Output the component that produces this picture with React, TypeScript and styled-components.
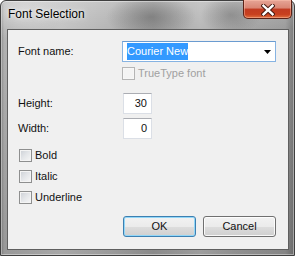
import React from 'react';
import styled, { createGlobalStyle } from 'styled-components';

const Global = createGlobalStyle`
  html, body { margin: 0; padding: 0; background: #ffffff; }
  body { font-family: "Liberation Sans", Arial, sans-serif; }
  * { box-sizing: border-box; }
`;

const Window = styled.div`
  width: 295px;
  height: 256px;
  display: flex;
  flex-direction: column;
  padding: 0 5px 5px 6px;
  border: 1px solid #3f3f3f;
  border-radius: 6px 6px 0 0;
  box-shadow: inset 0 0 0 1px rgba(255, 255, 255, 0.4);
  background:
    radial-gradient(ellipse 45px 22px at 150px 16px, rgba(80, 80, 80, 0.45), rgba(80, 80, 80, 0)),
    radial-gradient(ellipse 30px 20px at 230px 14px, rgba(80, 80, 80, 0.35), rgba(80, 80, 80, 0)),
    radial-gradient(ellipse 40px 30px at 20px 10px, rgba(255, 255, 255, 0.35), rgba(255, 255, 255, 0)),
    linear-gradient(to bottom, rgba(255, 255, 255, 0.2), rgba(255, 255, 255, 0) 28px, rgba(0, 0, 0, 0.15) 100%),
    linear-gradient(to right, #8a8a8a 0px, #b2b2b2 3px, #c4c4c4 20%, #b4b4b4 38%, #a2a2a2 52%, #b8b8b8 68%, #a8a8a8 80%, #9c9c9c 97%, #7c7c7c 100%);
`;

const TitleBar = styled.div`
  height: 28px;
  display: flex;
  align-items: flex-start;
  justify-content: space-between;
  flex: none;
`;

const Title = styled.div`
  margin: 6px 0 0 1px;
  font-size: 12px;
  line-height: 15px;
  color: #000;
  text-shadow: 0 0 6px rgba(255, 255, 255, 0.9), 0 0 3px rgba(255, 255, 255, 0.7);
`;

const CloseButton = styled.div`
  width: 49px;
  height: 19px;
  margin: -1px -3px 0 0;
  border: 1px solid #5b2217;
  border-top: none;
  border-radius: 0 0 5px 5px;
  display: flex;
  align-items: center;
  justify-content: center;
  box-shadow: inset 0 0 0 1px rgba(255, 200, 180, 0.45);
  background: linear-gradient(to bottom, #e6a596 0%, #d98573 45%, #c13b21 50%, #c8401f 80%, #e0703f 100%);
`;

const CloseGlyph = styled.svg`
  display: block;
  margin-top: 1px;
`;

const Client = styled.div`
  flex: 1;
  border: 1px solid #5f5f5f;
  background: #f0f0f0;
  padding: 11px 10px 0 10px;
  display: flex;
  flex-direction: column;
  font-size: 11px;
  color: #111;
`;

const Row = styled.div<{ $top?: number; $indent?: number }>`
  display: flex;
  align-items: center;
  margin-top: ${(p) => p.$top ?? 0}px;
  padding-left: ${(p) => p.$indent ?? 0}px;
`;

const Label = styled.div<{ $w: number }>`
  width: ${(p) => p.$w}px;
  flex: none;
  line-height: 13px;
`;

const Combo = styled.div`
  width: 154px;
  height: 21px;
  background: #fff;
  border: 1px solid #86b3e2;
  border-top-color: #6a9bd0;
  display: flex;
  align-items: center;
  padding: 0 4px;
  justify-content: space-between;
`;

const Selected = styled.span`
  background: #3399ff;
  color: #fff;
  line-height: 17px;
  height: 17px;
`;

const Arrow = styled.svg`
  display: block;
`;

const Box = styled.span<{ $disabled?: boolean }>`
  width: 13px;
  height: 13px;
  flex: none;
  border: 1px solid ${(p) => (p.$disabled ? '#b5b5b5' : '#8e8f8f')};
  box-shadow: inset 0 0 0 1px ${(p) => (p.$disabled ? '#f7f7f7' : '#f4f4f4')};
  background: ${(p) =>
    p.$disabled ? '#f4f4f4' : 'linear-gradient(135deg, #cbcfd5 0%, #e4e6e9 50%, #f7f7f7 100%)'};
`;

const CheckText = styled.span<{ $disabled?: boolean }>`
  margin-left: 3px;
  line-height: 13px;
  color: ${(p) => (p.$disabled ? '#a0a0a0' : '#111')};
`;

const NumberBox = styled.div`
  width: 29px;
  height: 21px;
  background: #fff;
  border: 1px solid #dbdfe6;
  border-top-color: #abadb3;
  text-align: right;
  padding-right: 4px;
  line-height: 19px;
`;

const Buttons = styled.div`
  display: flex;
  gap: 7px;
  margin-top: 12px;
  padding-left: 105px;
`;

const Button = styled.div<{ $default?: boolean }>`
  width: 73px;
  height: 21px;
  border-radius: 3px;
  border: 1px solid ${(p) => (p.$default ? '#3c7fb1' : '#707070')};
  box-shadow: inset 0 0 0 1px ${(p) => (p.$default ? '#92d7f8' : 'rgba(255,255,255,0.85)')};
  background: linear-gradient(to bottom, #f2f2f2 0%, #ebebeb 50%, #dddddd 51%, #cfcfcf 100%);
  display: flex;
  align-items: center;
  justify-content: center;
  line-height: 13px;
  color: #111;
`;

const CheckRow: React.FC<{ label: string; top: number; indent?: number; disabled?: boolean }> = ({
  label,
  top,
  indent,
  disabled,
}) => (
  <Row $top={top} $indent={indent}>
    <Box $disabled={disabled} />
    <CheckText $disabled={disabled}>{label}</CheckText>
  </Row>
);

export default function App() {
  return (
    <>
      <Global />
      <Window>
        <TitleBar>
          <Title>Font Selection</Title>
          <CloseButton>
            <CloseGlyph width="14" height="12" viewBox="0 0 14 12">
              <path
                d="M2.5 1.8 L11.5 10.2 M11.5 1.8 L2.5 10.2"
                stroke="#4a1c12"
                strokeWidth="4.4"
                strokeLinecap="square"
                fill="none"
              />
              <path
                d="M2.5 1.8 L11.5 10.2 M11.5 1.8 L2.5 10.2"
                stroke="#ffffff"
                strokeWidth="2.4"
                strokeLinecap="square"
                fill="none"
              />
            </CloseGlyph>
          </CloseButton>
        </TitleBar>
        <Client>
          <Row>
            <Label $w={104}>Font name:</Label>
            <Combo>
              <Selected>Courier New</Selected>
              <Arrow width="7" height="4" viewBox="0 0 7 4">
                <path d="M0 0 H7 L3.5 4 Z" fill="#000" />
              </Arrow>
            </Combo>
          </Row>
          <CheckRow label="TrueType font" top={5} indent={104} disabled />
          <Row $top={13}>
            <Label $w={105}>Height:</Label>
            <NumberBox>30</NumberBox>
          </Row>
          <Row $top={4}>
            <Label $w={105}>Width:</Label>
            <NumberBox>0</NumberBox>
          </Row>
          <CheckRow label="Bold" top={10} indent={1} />
          <CheckRow label="Italic" top={8} indent={1} />
          <CheckRow label="Underline" top={8} indent={1} />
          <Buttons>
            <Button $default>OK</Button>
            <Button>Cancel</Button>
          </Buttons>
        </Client>
      </Window>
    </>
  );
}
